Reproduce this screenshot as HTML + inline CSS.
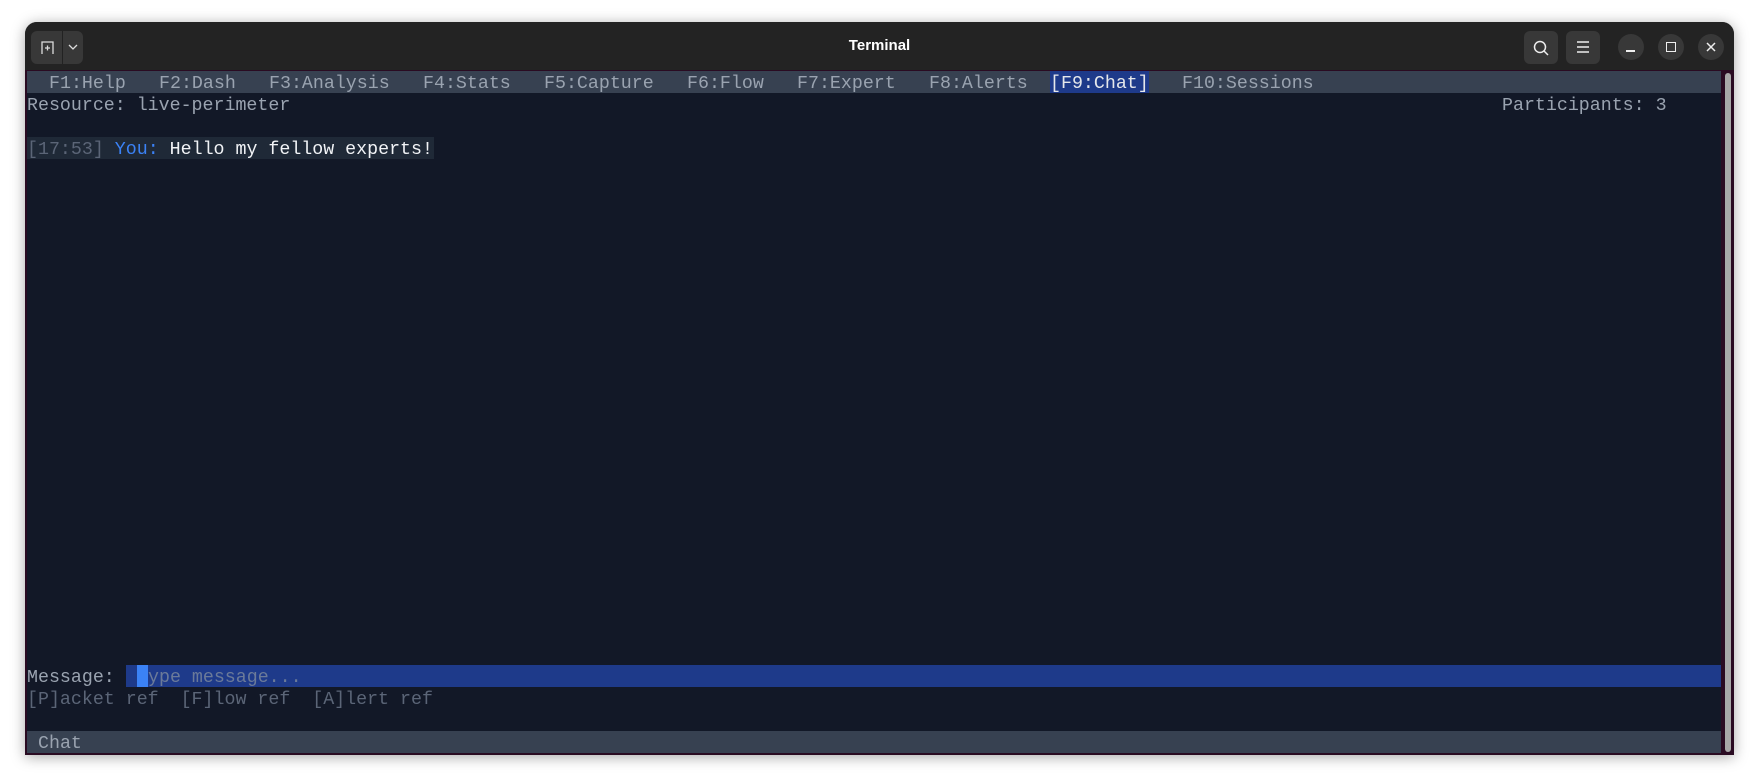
<!DOCTYPE html>
<html><head><meta charset="utf-8"><style>
*{margin:0;padding:0;box-sizing:border-box}
body{width:1760px;height:783px;background:#fff;position:relative;overflow:hidden;font-family:"Liberation Mono",monospace}
.win{position:absolute;left:25px;top:22px;width:1709px;height:733px;border-radius:12px 12px 0 0;background:#222;box-shadow:0 2px 14px rgba(0,0,0,.35);overflow:hidden}
.title{position:absolute;left:0;top:0;right:0;height:49px;background:#232323}
.tt{position:absolute;left:0;right:0;top:15px;text-align:center;color:#fff;font:bold 15px "Liberation Sans",sans-serif}
.btn{position:absolute;background:#383838;border-radius:6px}
.circ{position:absolute;width:26px;height:26px;border-radius:50%;background:#383838}
.term{position:absolute;left:0;top:48px;width:1709px;height:685px;background:#2a0b22}
.t{position:absolute;font-size:18.3px;line-height:22px;white-space:pre;color:#9aa3b0;margin-top:2px}
</style></head><body>
<div class="win">
 <div class="title">
  <div class="btn" style="left:6px;top:9px;width:52px;height:33px"></div>
  <div style="position:absolute;left:37px;top:9px;width:1px;height:33px;background:#222"></div>
  <svg style="position:absolute;left:14px;top:17px" width="18" height="18" viewBox="0 0 18 18" fill="none" stroke="#ddd" stroke-width="1.3"><path d="M3 15V3h11v12M6 9h5M8.5 6.5v5"/></svg>
  <svg style="position:absolute;left:42px;top:20px" width="12" height="10" viewBox="0 0 12 10" fill="none" stroke="#ddd" stroke-width="1.3"><path d="M2 3l4 4 4-4"/></svg>
  <div class="tt">Terminal</div>
  <div class="btn" style="left:1499px;top:9px;width:34px;height:33px"></div>
  <svg style="position:absolute;left:1507px;top:17px" width="18" height="18" viewBox="0 0 18 18" fill="none" stroke="#eee" stroke-width="1.5"><circle cx="8" cy="8" r="5.5"/><path d="M12 12l4 4"/></svg>
  <div class="btn" style="left:1541px;top:9px;width:34px;height:33px"></div>
  <svg style="position:absolute;left:1550px;top:18px" width="16" height="14" viewBox="0 0 16 14" stroke="#eee" stroke-width="1.4"><path d="M2 2h12M2 7h12M2 12h12"/></svg>
  <div class="circ" style="left:1593px;top:12px"></div>
  <div style="position:absolute;left:1601px;top:28px;width:9px;height:1.5px;background:#eee"></div>
  <div class="circ" style="left:1633px;top:12px"></div>
  <div style="position:absolute;left:1641px;top:20px;width:10px;height:10px;border:1.5px solid #eee"></div>
  <div class="circ" style="left:1673px;top:12px"></div>
  <svg style="position:absolute;left:1680px;top:19px" width="12" height="12" viewBox="0 0 12 12" stroke="#eee" stroke-width="1.5"><path d="M2 2l8 8M10 2l-8 8"/></svg>
 </div>
 <div class="term">
  <div style="position:absolute;left:2px;top:1px;width:1694px;height:682px;background:#121827"></div>
  <div style="position:absolute;left:1700px;top:3px;width:6px;height:679px;background:#a8a8a8;border-radius:3px"></div>
  <div style="position:absolute;left:2px;top:1px;width:1694px;height:22px;background:#374151"></div>
  <div style="position:absolute;left:1025px;top:1px;width:99px;height:22px;background:#1e3a8a"></div>
  <div class="t" style="left:24px;top:1px">F1:Help</div>
  <div class="t" style="left:134px;top:1px">F2:Dash</div>
  <div class="t" style="left:244px;top:1px">F3:Analysis</div>
  <div class="t" style="left:398px;top:1px">F4:Stats</div>
  <div class="t" style="left:519px;top:1px">F5:Capture</div>
  <div class="t" style="left:662px;top:1px">F6:Flow</div>
  <div class="t" style="left:772px;top:1px">F7:Expert</div>
  <div class="t" style="left:904px;top:1px">F8:Alerts</div>
  <div class="t" style="left:1025px;top:1px;color:#e5e7eb">[F9:Chat]</div>
  <div class="t" style="left:1157px;top:1px">F10:Sessions</div>
  <div class="t" style="left:2px;top:23px">Resource: live-perimeter</div>
  <div class="t" style="left:1477px;top:23px">Participants: 3</div>
  <div style="position:absolute;left:2px;top:67px;width:407px;height:22px;background:#1f2937"></div>
  <div class="t" style="left:2px;top:67px"><span style="color:#5b6577">[17:53]</span> <span style="color:#3b82f6">You:</span> <span style="color:#f1f3f6">Hello my fellow experts!</span></div>
  <div class="t" style="left:2px;top:595px">Message:</div>
  <div style="position:absolute;left:101px;top:595px;width:1595px;height:22px;background:#1e3a8a"></div>
  <div style="position:absolute;left:112px;top:595px;width:11px;height:22px;background:#3b82f6"></div>
  <div class="t" style="left:123px;top:595px;color:#6b7a99">ype message...</div>
  <div class="t" style="left:2px;top:617px;color:#5b6577">[P]acket ref  [F]low ref  [A]lert ref</div>
  <div style="position:absolute;left:2px;top:661px;width:1694px;height:22px;background:#374151"></div>
  <div class="t" style="left:13px;top:661px">Chat</div>
 </div>
</div>
</body></html>
